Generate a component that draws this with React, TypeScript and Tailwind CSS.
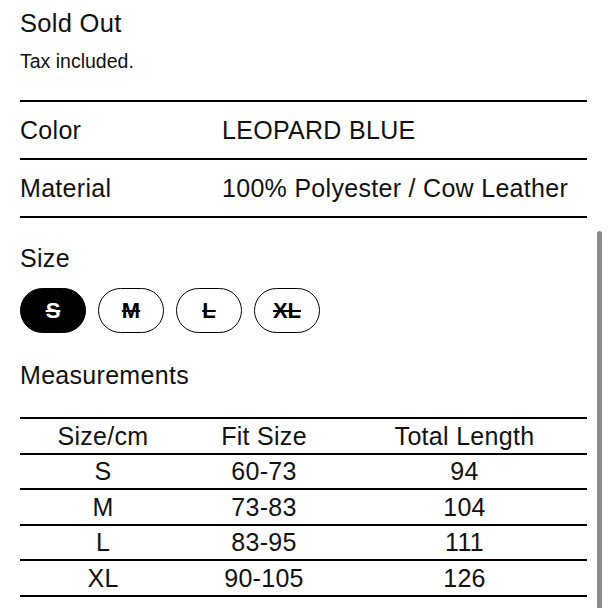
const sizes = [
    { label: "S", selected: true },
    { label: "M", selected: false },
    { label: "L", selected: false },
    { label: "XL", selected: false },
]

const measurements = [
    { size: "S", fit: "60-73", length: "94" },
    { size: "M", fit: "73-83", length: "104" },
    { size: "L", fit: "83-95", length: "111" },
    { size: "XL", fit: "90-105", length: "126" },
]

export default function App() {
    return (
        <div className="relative w-[608px] h-[608px] overflow-hidden bg-white text-[#111] font-['Liberation_Sans',Arial,sans-serif]">
            <div className="w-[567px] ml-5 pt-2">
                <div className="text-[25.5px] leading-[30px] tracking-[0.3px]">Sold Out</div>
                <div className="mt-3 text-[19.5px] leading-[22px]">Tax included.</div>

                {/* product details */}
                <div className="mt-7 border-t-2 border-black">
                    <DetailRow label="Color" value="LEOPARD BLUE" />
                    <DetailRow label="Material" value="100% Polyester / Cow Leather" />
                </div>

                <div className="mt-[25px] text-[25px] leading-[30px] tracking-[0.3px]">Size</div>
                <div className="mt-[15px] flex gap-3">
                    {sizes.map((s) => (
                        <div
                            key={s.label}
                            className={
                                s.selected
                                    ? "w-[66px] h-[45px] rounded-full bg-black border-[1.5px] border-black flex items-center justify-center text-white text-[22px] font-bold line-through"
                                    : "w-[66px] h-[45px] rounded-full bg-white border-[1.5px] border-black flex items-center justify-center text-black text-[22px] font-bold line-through"
                            }
                        >
                            {s.label}
                        </div>
                    ))}
                </div>

                <div className="mt-[27px] text-[25px] leading-[30px] tracking-[0.3px]">Measurements</div>

                {/* size chart */}
                <div className="mt-[27px] border-t-2 border-black text-[25px] leading-[30px] tracking-[0.3px]">
                    <div className="grid grid-cols-[166px_156px_1fr] h-[35.5px] items-center text-center border-b-2 border-black">
                        <div>Size/cm</div>
                        <div>Fit Size</div>
                        <div>Total Length</div>
                    </div>
                    {measurements.map((m) => (
                        <div key={m.size} className="grid grid-cols-[166px_156px_1fr] h-[35.5px] items-center text-center border-b-2 border-black">
                            <div>{m.size}</div>
                            <div>{m.fit}</div>
                            <div>{m.length}</div>
                        </div>
                    ))}
                </div>
            </div>

            {/* scroll indicator */}
            <div className="absolute left-[597px] top-[231px] w-[5px] h-[400px] rounded-full bg-[#8c8c8c]" />
        </div>
    )
}

function DetailRow({ label, value }: { label: string, value: string }) {
    return (
        <div className="h-[58px] flex items-center border-b-2 border-black text-[25px] leading-[30px] tracking-[0.3px]">
            <div className="w-[202px]">{label}</div>
            <div>{value}</div>
        </div>
    )
}
